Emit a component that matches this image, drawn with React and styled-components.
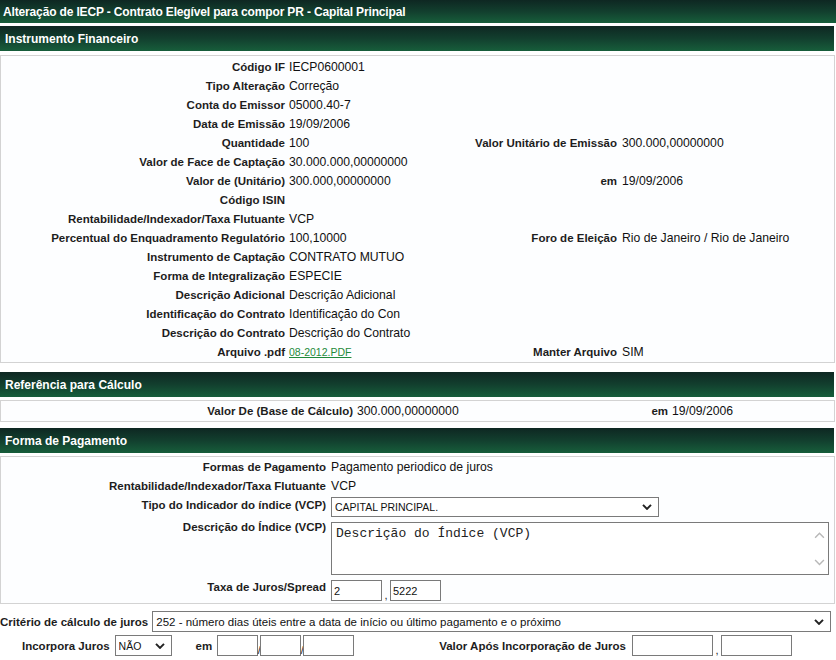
import React from "react";
import styled, { createGlobalStyle } from "styled-components";

const GlobalStyle = createGlobalStyle`
  body {
    margin: 0;
    background: #ffffff;
    font-family: "Liberation Sans", Arial, sans-serif;
    color: #111;
  }
`;

const instrumentRows = [
  ["Código IF", "IECP0600001"],
  ["Tipo Alteração", "Correção"],
  ["Conta do Emissor", "05000.40-7"],
  ["Data de Emissão", "19/09/2006"],
  ["Quantidade", "100", "Valor Unitário de Emissão", "300.000,00000000"],
  ["Valor de Face de Captação", "30.000.000,00000000"],
  ["Valor de (Unitário)", "300.000,00000000", "em", "19/09/2006"],
  ["Código ISIN", ""],
  ["Rentabilidade/Indexador/Taxa Flutuante", "VCP"],
  ["Percentual do Enquadramento Regulatório", "100,10000", "Foro de Eleição", "Rio de Janeiro / Rio de Janeiro"],
  ["Instrumento de Captação", "CONTRATO MUTUO"],
  ["Forma de Integralização", "ESPECIE"],
  ["Descrição Adicional", "Descrição Adicional"],
  ["Identificação do Contrato", "Identificação do Con"],
  ["Descrição do Contrato", "Descrição do Contrato"],
  ["Arquivo .pdf", "link:08-2012.PDF", "Manter Arquivo", "SIM"],
];

function Chevron({ size = 10, color = "#222", weight = 2 }) {
  return (
    <svg width={size} height={size * 0.62} viewBox="0 0 10 6.2">
      <polyline points="1,1 5,5 9,1" fill="none" stroke={color} strokeWidth={weight} />
    </svg>
  );
}

function Value({ text, pl }) {
  if (text.startsWith("link:")) {
    return (
      <ValueCell $pl={pl}>
        <FileLink href="#">{text.slice(5)}</FileLink>
      </ValueCell>
    );
  }
  return <ValueCell $pl={pl}>{text}</ValueCell>;
}

export default function App() {
  return (
    <Page>
      <GlobalStyle />
      <TitleBar>Alteração de IECP - Contrato Elegível para compor PR - Capital Principal</TitleBar>

      <SectionBar $top={3}>Instrumento Financeiro</SectionBar>
      <Panel $top={4} $pad="1px 0 1px">
        {instrumentRows.map(([l1, v1, l2, v2], i) => (
          <FieldRow key={i} $cols="284px 185px 147px 1fr">
            <LabelCell>{l1}</LabelCell>
            <Value text={v1} pl={4} />
            <LabelCell>{l2 || ""}</LabelCell>
            <ValueCell $pl={5}>{v2 || ""}</ValueCell>
          </FieldRow>
        ))}
      </Panel>

      <SectionBar $top={9}>Referência para Cálculo</SectionBar>
      <Panel $top={3} $pad="0">
        <FieldRow $cols="352px 204px 111px 1fr" $h={20}>
          <LabelCell>Valor De (Base de Cálculo)</LabelCell>
          <ValueCell>300.000,00000000</ValueCell>
          <LabelCell>em</LabelCell>
          <ValueCell>19/09/2006</ValueCell>
        </FieldRow>
      </Panel>

      <SectionBar $top={6}>Forma de Pagamento</SectionBar>
      <Panel $top={3} $pad="0">
        <FieldRow $cols="325px 1fr">
          <LabelCell>Formas de Pagamento</LabelCell>
          <ValueCell $pl={5}>Pagamento periodico de juros</ValueCell>
        </FieldRow>
        <FieldRow $cols="325px 1fr">
          <LabelCell>Rentabilidade/Indexador/Taxa Flutuante</LabelCell>
          <ValueCell $pl={5}>VCP</ValueCell>
        </FieldRow>
        <ControlRow>
          <TopLabel $pt={4}>Tipo do Indicador do índice (VCP)</TopLabel>
          <ControlCell $pt={2}>
            <SelectWrap $w={328} $h={20}>
              <NativeSelect defaultValue="cp">
                <option value="cp">CAPITAL PRINCIPAL.</option>
              </NativeSelect>
              <SelectArrow>
                <Chevron />
              </SelectArrow>
            </SelectWrap>
          </ControlCell>
        </ControlRow>
        <ControlRow>
          <TopLabel $pt={2}>Descrição do Índice (VCP)</TopLabel>
          <ControlCell $pt={3}>
            <AreaWrap>
              <TextArea defaultValue="Descrição do Índice (VCP)" />
              <FakeScroll>
                <span style={{ transform: "rotate(180deg)" }}>
                  <Chevron size={11} color="#b8b8b8" weight={1.3} />
                </span>
                <Chevron size={11} color="#b8b8b8" weight={1.3} />
              </FakeScroll>
            </AreaWrap>
          </ControlCell>
        </ControlRow>
        <ControlRow>
          <TopLabel $pt={4}>Taxa de Juros/Spread</TopLabel>
          <ControlCell $pt={3}>
            <Inline>
              <TextBox $w={51} $h={21} defaultValue="2" />
              <Sep $w={8}>,</Sep>
              <TextBox $w={51} $h={21} defaultValue="5222" />
            </Inline>
          </ControlCell>
        </ControlRow>
      </Panel>

      <CriteriaRow>
        <BoldText>Critério de cálculo de juros</BoldText>
        <SelectWrap $w={679} $h={21}>
          <NativeSelect $size={11.5} defaultValue="252">
            <option value="252">
              252 - número dias úteis entre a data de início ou último pagamento e o próximo
            </option>
          </NativeSelect>
          <SelectArrow>
            <Chevron />
          </SelectArrow>
        </SelectWrap>
      </CriteriaRow>

      <BottomRow>
        <BoldText>Incorpora Juros</BoldText>
        <SelectWrap $w={57} $h={21} $ml={5}>
          <NativeSelect defaultValue="nao">
            <option value="nao">NÃO</option>
          </NativeSelect>
          <SelectArrow>
            <Chevron />
          </SelectArrow>
        </SelectWrap>
        <BoldText $ml={24}>em</BoldText>
        <Inline $ml={5}>
          <TextBox $w={41} $h={21} />
          <Sep $w={2}>/</Sep>
          <TextBox $w={41} $h={21} />
          <Sep $w={2}>/</Sep>
          <TextBox $w={51} $h={21} />
        </Inline>
        <BoldText $ml={85}>Valor Após Incorporação de Juros</BoldText>
        <Inline $ml={6}>
          <TextBox $w={81} $h={21} />
          <Sep $w={8}>,</Sep>
          <TextBox $w={71} $h={21} />
        </Inline>
      </BottomRow>
    </Page>
  );
}

const Page = styled.div`
  width: 836px;
  min-height: 660px;
  background: #fff;
`;

const barGradient = "linear-gradient(to bottom, #0e2722 0%, #123f2e 50%, #175e3b 100%)";

const TitleBar = styled.div`
  height: 23px;
  display: flex;
  align-items: center;
  padding-left: 3px;
  background: ${barGradient};
  color: #fff;
  font-weight: bold;
  font-size: 12px;
  letter-spacing: -0.15px;
`;

const SectionBar = styled.div`
  width: 834px;
  height: 25px;
  box-sizing: border-box;
  margin-top: ${(p) => p.$top}px;
  display: flex;
  align-items: center;
  padding-left: 5px;
  background: ${barGradient};
  color: #fff;
  font-weight: bold;
  font-size: 12px;
`;

const Panel = styled.div`
  width: 835px;
  box-sizing: border-box;
  margin-top: ${(p) => p.$top}px;
  padding: ${(p) => p.$pad};
  border: 1px solid #d3d3d3;
  background: #fdfeff;
`;

const FieldRow = styled.div`
  display: grid;
  grid-template-columns: ${(p) => p.$cols};
  height: ${(p) => p.$h || 19}px;
  align-items: center;
`;

const LabelCell = styled.div`
  text-align: right;
  font-weight: bold;
  font-size: 11.5px;
  color: #1d1d1d;
  white-space: nowrap;
`;

const ValueCell = styled.div`
  padding-left: ${(p) => p.$pl || 4}px;
  font-size: 12.2px;
  color: #111;
  white-space: nowrap;
`;

const FileLink = styled.a`
  color: #1f8a3c;
  font-size: 10.5px;
  text-decoration: underline;
`;

const ControlRow = styled.div`
  display: grid;
  grid-template-columns: 325px 1fr;
  align-items: start;
`;

const TopLabel = styled(LabelCell)`
  padding-top: ${(p) => p.$pt}px;
`;

const ControlCell = styled.div`
  padding: ${(p) => p.$pt}px 0 2px 5px;
`;

const SelectWrap = styled.div`
  position: relative;
  width: ${(p) => p.$w}px;
  height: ${(p) => p.$h}px;
  margin-left: ${(p) => p.$ml || 0}px;
  flex-shrink: 0;
`;

const NativeSelect = styled.select`
  appearance: none;
  width: 100%;
  height: 100%;
  box-sizing: border-box;
  border: 1px solid #7a7a7a;
  border-radius: 0;
  background: #fff;
  padding: 0 20px 0 3px;
  font-family: "Liberation Sans", Arial, sans-serif;
  font-size: ${(p) => p.$size || 10.5}px;
  color: #111;
  outline: none;
`;

const SelectArrow = styled.span`
  position: absolute;
  right: 7px;
  top: 50%;
  transform: translateY(-50%);
  display: flex;
  pointer-events: none;
`;

const AreaWrap = styled.div`
  position: relative;
  width: 498px;
  height: 53px;
`;

const TextArea = styled.textarea`
  width: 100%;
  height: 100%;
  box-sizing: border-box;
  resize: none;
  overflow: hidden;
  border: 1px solid #7a7a7a;
  border-radius: 0;
  padding: 3px 4px;
  font-family: "Liberation Mono", "Courier New", monospace;
  font-size: 13px;
  color: #222;
  outline: none;
`;

const FakeScroll = styled.div`
  position: absolute;
  right: 1px;
  top: 1px;
  bottom: 1px;
  width: 17px;
  display: flex;
  flex-direction: column;
  justify-content: space-between;
  align-items: center;
  padding: 9px 0 8px;
  box-sizing: border-box;
  pointer-events: none;

  span {
    display: flex;
  }
`;

const Inline = styled.div`
  display: flex;
  align-items: flex-end;
  margin-left: ${(p) => p.$ml || 0}px;
`;

const TextBox = styled.input`
  width: ${(p) => p.$w}px;
  height: ${(p) => p.$h || 22}px;
  box-sizing: border-box;
  border: 1px solid #7a7a7a;
  border-radius: 0;
  padding: 0 2px;
  font-family: "Liberation Sans", Arial, sans-serif;
  font-size: 11px;
  color: #111;
  outline: none;
`;

const Sep = styled.span`
  width: ${(p) => p.$w}px;
  display: flex;
  justify-content: center;
  font-size: 11px;
  line-height: 12px;
  color: #222;
`;

const CriteriaRow = styled.div`
  display: flex;
  align-items: center;
  gap: 4px;
  margin-top: 7px;
  height: 21px;
`;

const BottomRow = styled.div`
  display: flex;
  align-items: center;
  margin-top: 3px;
  padding-left: 22px;
  height: 21px;
`;

const BoldText = styled.span`
  font-weight: bold;
  font-size: 11.5px;
  color: #1d1d1d;
  white-space: nowrap;
  margin-left: ${(p) => p.$ml || 0}px;
`;
